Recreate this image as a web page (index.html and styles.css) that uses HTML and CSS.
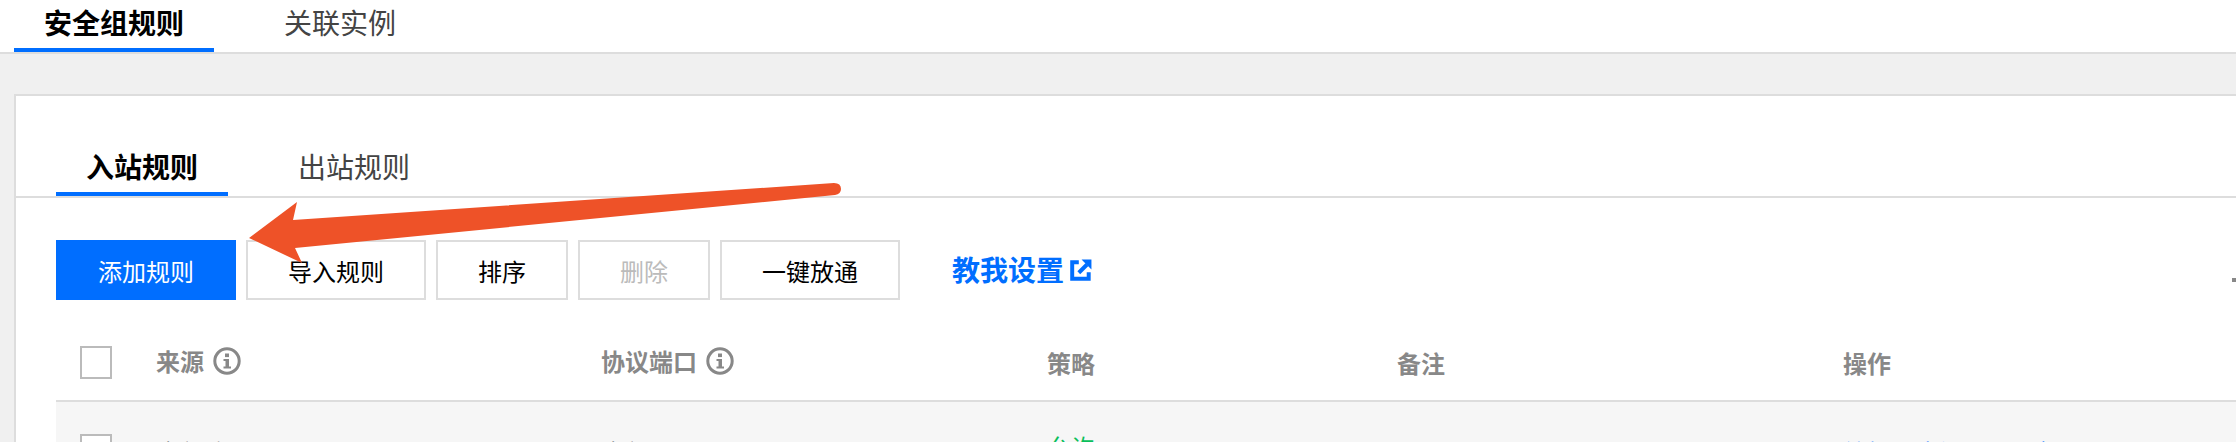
FILE: index.html
```html
<!DOCTYPE html>
<html lang="zh-CN">
<head>
    <meta charset="UTF-8">
    <meta name="viewport" content="width=device-width, initial-scale=1.0">
    <title>安全组规则</title>
    <link rel="stylesheet" href="styles.css">
</head>
<body>

    <div class="page">
        <!-- Top Tabs -->
        <div class="top-tabs">
            <a class="tab tab-active">安全组规则</a>
            <a class="tab tab-next">关联实例</a>
        </div>

        <div class="card">
            <!-- Inbound / Outbound -->
            <div class="sub-tabs">
                <a class="tab tab-active">入站规则</a>
                <a class="tab tab-next-sub">出站规则</a>
            </div>

            <!-- Toolbar -->
            <div class="toolbar">
                <button class="btn btn-primary">添加规则</button>
                <button class="btn btn-wide">导入规则</button>
                <button class="btn">排序</button>
                <button class="btn btn-disabled">删除</button>
                <button class="btn btn-wide">一键放通</button>
                <a class="help-link">教我设置
                    <svg class="link-icon" viewBox="0 0 20 20">
                        <path d="M8 3H2v15h15v-6" fill="none" stroke="#006eff" stroke-width="3.6"/>
                        <path d="M8 12.500L15.500 5" fill="none" stroke="#006eff" stroke-width="3.6"/>
                        <path d="M10.500 0.500h9v9z" fill="#006eff"/>
                    </svg>
                </a>
                <span class="toolbar-mark"></span>
            </div>

            <!-- Rules Table -->
            <div class="table-head">
                <span class="checkbox"></span>
                <div class="head-cell">来源
                    <svg class="info-icon" viewBox="0 0 28 28">
                        <circle cx="14" cy="14" r="12.200" fill="none" stroke="#888" stroke-width="3"/>
                        <rect x="12" y="6.500" width="4" height="3.600" fill="#888"/>
                        <path d="M10.500 12h5.500v7.500h2v2h-7.500v-2h2v-5.500h-2z" fill="#888"/>
                    </svg>
                </div>
                <div class="head-cell">协议端口
                    <svg class="info-icon" viewBox="0 0 28 28">
                        <circle cx="14" cy="14" r="12.200" fill="none" stroke="#888" stroke-width="3"/>
                        <rect x="12" y="6.500" width="4" height="3.600" fill="#888"/>
                        <path d="M10.500 12h5.500v7.500h2v2h-7.500v-2h2v-5.500h-2z" fill="#888"/>
                    </svg>
                </div>
                <div class="head-cell head-plain">策略</div>
                <div class="head-cell head-plain">备注</div>
                <div class="head-cell head-plain">操作</div>
            </div>

            <div class="table-row">
                <span class="checkbox"></span>
                <div class="cell">全部流量</div>
                <div class="cell">全部</div>
                <div class="cell cell-allow">允许</div>
                <div class="cell"></div>
                <div class="cell cell-actions">
                    <a>编辑</a>
                    <a>插入</a>
                    <a>删除</a>
                </div>
            </div>
        </div>

        <!-- Annotation arrow drawn over the screenshot -->
        <svg class="annotation" viewBox="0 0 2236 442">
            <path d="M249 238L297 202L293 220L834 183Q841 183 841 189Q841 194 835 195L295 248L302 263Z" fill="#ee5228"/>
        </svg>
    </div>

</body>
</html>
```
FILE: styles.css
```css
html, body {
    margin: 0;
    padding: 0;
    height: 442px;
    overflow: hidden;
}

body {
    font-family: "Noto Sans CJK SC", "Liberation Sans", sans-serif;
    background-color: #f0f0f0;
    color: #000;
}

.page {
    position: relative;
    width: 2236px;
    height: 442px;
    overflow: hidden;
}

/* Tabs */
.top-tabs {
    display: flex;
    height: 52px;
    padding-left: 14px;
    background-color: #fff;
    border-bottom: 2px solid #ddd;
}

.tab {
    box-sizing: border-box;
    padding: 0 30px;
    font-size: 28px;
    color: #444;
}

.tab-active {
    font-weight: bold;
    color: #000;
    border-bottom: 4px solid #006eff;
}

.top-tabs .tab {
    height: 52px;
    line-height: 44px;
}

.tab-next {
    margin-left: 40px;
}

.tab-next-sub {
    margin-left: 40px;
}

/* Card */
.card {
    margin: 40px 0 0 14px;
    height: 346px;
    background-color: #fff;
    border-top: 2px solid #ddd;
    border-left: 2px solid #ddd;
}

.sub-tabs {
    display: flex;
    height: 100px;
    padding-left: 40px;
    border-bottom: 2px solid #ddd;
    align-items: flex-end;
}

.sub-tabs .tab {
    height: 50px;
    line-height: 40px;
}

/* Toolbar */
.toolbar {
    display: flex;
    height: 60px;
    margin-top: 42px;
    padding-left: 40px;
    gap: 10px;
}

.btn {
    box-sizing: border-box;
    width: 132px;
    height: 60px;
    padding: 0;
    background-color: #fff;
    border: 2px solid #ddd;
    font-family: inherit;
    font-size: 24px;
    color: #000;
}

.btn-wide {
    width: 180px;
}

.btn-primary {
    width: 180px;
    background-color: #006eff;
    border-color: #006eff;
    color: #fff;
}

.btn-disabled {
    color: #bbb;
}

.help-link {
    display: flex;
    align-items: center;
    height: 58px;
    margin-left: 42px;
    gap: 6px;
    font-size: 28px;
    font-weight: bold;
    color: #006eff;
}

.link-icon {
    width: 22px;
    height: 22px;
    margin-top: 2px;
}

.toolbar-mark {
    width: 4px;
    height: 4px;
    margin: 38px 0 0 auto;
    background-color: #888;
}

/* Table */
.table-head,
.table-row {
    display: grid;
    grid-template-columns: 76px 445px 446px 350px 446px 1fr;
    box-sizing: border-box;
    margin-left: 40px;
    padding-left: 24px;
}

.table-head {
    height: 102px;
    padding-top: 46px;
    border-bottom: 2px solid #ddd;
}

.table-row {
    height: 60px;
    padding-top: 32px;
    background-color: #f6f6f6;
}

.checkbox {
    box-sizing: border-box;
    width: 32px;
    height: 33px;
    background-color: #fff;
    border: 2px solid #bbb;
}

.head-cell {
    display: flex;
    align-items: center;
    gap: 9px;
    height: 29px;
    font-size: 24px;
    font-weight: bold;
    color: #888;
}

.head-plain {
    margin-top: 2px;
}

.info-icon {
    width: 28px;
    height: 28px;
}

.cell {
    padding-top: 2px;
    font-size: 24px;
    line-height: 32px;
    color: #444;
}

.cell-allow {
    margin-top: -5px;
    color: #0abf5b;
}

.cell-actions {
    display: flex;
    gap: 32px;
    color: #006eff;
}

.annotation {
    position: absolute;
    top: 0;
    left: 0;
    width: 2236px;
    height: 442px;
    pointer-events: none;
}
```
